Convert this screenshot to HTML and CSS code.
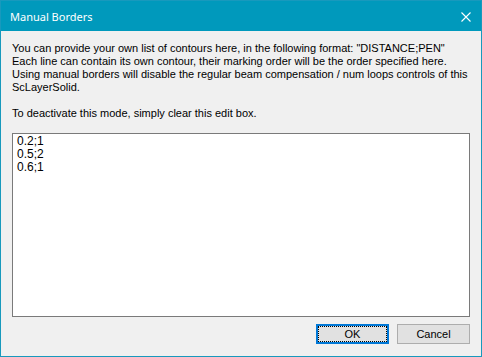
FILE: index.html
```html
<!DOCTYPE html>
<html lang="en">
<head>
    <meta charset="UTF-8">
    <title>Manual Borders</title>
    <link rel="stylesheet" href="styles.css">
</head>
<body>
    <div class="window">
        <!-- Title bar -->
        <div class="titlebar">
            <span class="title">Manual Borders</span>
            <svg class="close" width="10" height="10" viewBox="0 0 10 10">
                <path d="M0.5 0.5 L9.5 9.5 M9.5 0.5 L0.5 9.5" stroke="#fff" stroke-width="1.1" fill="none"/>
            </svg>
        </div>

        <!-- Dialog body -->
        <div class="content">
            <p class="info">You can provide your own list of contours here, in the following format: "DISTANCE;PEN"<br>
            Each line can contain its own contour, their marking order will be the order specified here.<br>
            Using manual borders will disable the regular beam compensation / num loops controls of this<br>
            ScLayerSolid.</p>
            <p class="info">To deactivate this mode, simply clear this edit box.</p>

            <div class="editbox">
                <div>0.2;1</div>
                <div>0.5;2</div>
                <div>0.6;1</div>
            </div>

            <div class="buttons">
                <button class="btn btn-default"><span>OK</span></button>
                <button class="btn">Cancel</button>
            </div>
        </div>
    </div>
</body>
</html>
```

FILE: styles.css
```css
* {
    margin: 0;
    padding: 0;
    box-sizing: border-box;
}
body {
    background: #f0f0f0;
    font-family: Tahoma, "DejaVu Sans", "Liberation Sans", sans-serif;
    font-size: 11px;
    color: #000;
}
.window {
    width: 482px;
    height: 357px;
    border: 1px solid #1899bd;
    background: #f0f0f0;
    display: flex;
    flex-direction: column;
}
.titlebar {
    height: 30px;
    background: #0099bc;
    color: #fff;
    display: flex;
    align-items: center;
    justify-content: space-between;
    padding: 0 10px 0 9px;
}
.title {
    font-family: "Noto Sans", "Open Sans", sans-serif;
    font-size: 11px;
    margin-top: 1px;
}
.close {
    margin-top: 1px;
}
.content {
    flex: 1;
    display: flex;
    flex-direction: column;
    padding: 11px 11px 0 11px;
}
.info {
    font-family: "Liberation Sans", sans-serif;
    font-size: 11px;
    line-height: 13px;
    margin-bottom: 13px;
    white-space: nowrap;
}
.editbox {
    height: 184px;
    background: #fff;
    border: 1px solid #7a7a7a;
    padding: 1px 4px;
    font-family: "Liberation Sans", sans-serif;
    font-size: 12px;
    line-height: 13px;
}
.buttons {
    display: flex;
    justify-content: flex-end;
    gap: 8px;
    margin-top: 7px;
}
.btn {
    width: 73px;
    height: 20px;
    background: #e1e1e1;
    border: 1px solid #adadad;
    font-family: "Liberation Sans", sans-serif;
    font-size: 11px;
    color: #000;
}
.btn-default {
    border: 2px solid #0078d7;
    padding: 1px;
}
.btn-default span {
    display: flex;
    align-items: center;
    justify-content: center;
    height: 100%;
    outline: 1px dotted #000;
}
```
